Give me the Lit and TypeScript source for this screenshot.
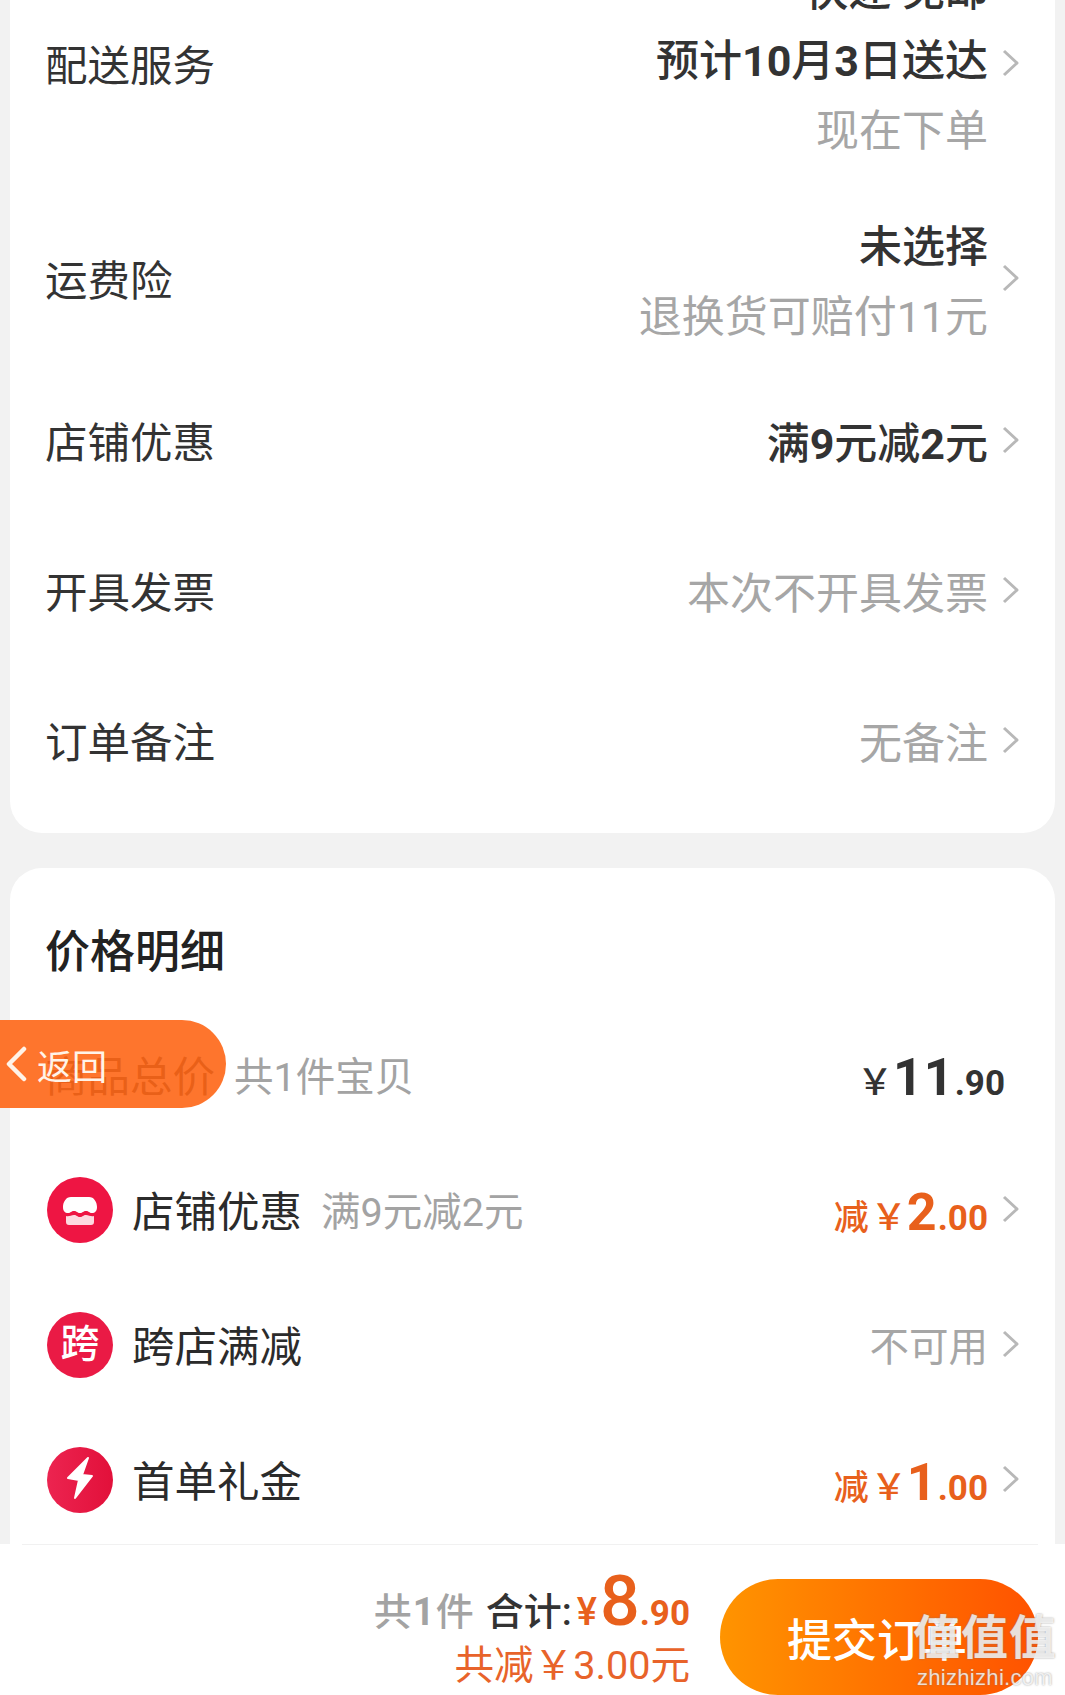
import { LitElement, html, css } from "lit";
import { customElement } from "lit/decorators.js";

const chevron = html`<svg class="chev" viewBox="0 0 17 28" width="17" height="28"><polyline points="2,2 15,14 2,26" fill="none" stroke="#b8b8b8" stroke-width="3" stroke-linejoin="round"/></svg>`;

@customElement("app-root")
export class AppRoot extends LitElement {
  static styles = css`
    :host {
      display: flex;
      flex-direction: column;
      width: 1065px;
      height: 1695px;
      overflow: hidden;
      position: relative;
      background: #f2f2f2;
      font-family: Roboto, "Noto Sans CJK SC", sans-serif;
      color: #333;
      font-size: 43px;
    }
    .scroll { flex: 1; min-height: 0; overflow: hidden; padding: 0 10px; }
    .card { background: #fff; padding: 0 35px; }
    .card.top { margin-top: -42px; height: 875px; border-radius: 0 0 32px 32px; box-sizing: border-box; }
    .card.price { margin-top: 35px; border-radius: 32px 32px 0 0; height: 700px; box-sizing: border-box; }
    .row { display: flex; align-items: center; justify-content: space-between; box-sizing: border-box; }
    .r1 { height: 212px; }
    .r1 .label { margin-top: 6px; }
    .r2 { height: 198px; padding: 42px 0 16px; }
    .r3 { height: 150px; padding-top: 2px; }
    .label { font-size: 42.5px; line-height: 60px; color: #333; }
    .right { display: flex; align-items: center; gap: 14px; margin-right: 1px; }
    .val { line-height: 60px; }
    .lines { display: flex; flex-direction: column; align-items: flex-end; line-height: 70px; }
    .r1 .lines { margin-bottom: 6px; }
    .r1 .lines div:nth-child(1), .r1 .lines div:nth-child(2) { font-weight: 500; }
    .strong { font-weight: 500; color: #333; }
    .b { font-weight: 700; }
    .gray { color: #a6a6a6; }
    .chev { flex: none; margin-bottom: 8px; }
    .r1 .chev { margin-bottom: 2px; }
    .title { font-size: 45px; font-weight: 500; line-height: 60px; padding: 55px 0 27px; color: #222; }
    .p { height: 135px; }
    .left { display: flex; align-items: center; }
    .sub { font-size: 39.5px; line-height: 60px; color: #a3a3a3; margin-left: 19px; }
    .small { font-size: 39.5px; }
    .p .label { color: #2b2b2b; }
    .icon { flex: none; width: 66px; height: 66px; margin: 0 19px 6px 2px; display: block; }
    .badge {
      flex: none; width: 66px; height: 66px; margin: 0 19px 6px 2px; border-radius: 50%;
      background: #ea1a45; color: #fff; font-size: 39px; line-height: 1; font-weight: 500;
      display: flex; align-items: center; justify-content: center; padding-bottom: 1px; box-sizing: border-box;
    }
    .money { display: flex; align-items: baseline; font-weight: 700; line-height: 1; }
    .money .y { font-family: "Noto Sans CJK SC", sans-serif; font-weight: 500; font-size: 36px; margin: 0 0 0 -2px; }
    .money .i { font-size: 52px; letter-spacing: 1px; }
    .money .d { font-size: 35px; }
    .total { margin-right: 15px; color: #333; }
    .off { color: #e8601c; }
    .off .j { font-weight: 500; font-size: 35px; margin-right: 4px; }
    .footer {
      flex: none; height: 151px; background: #fff; position: relative;
      display: flex; justify-content: flex-end; box-sizing: border-box;
      padding: 22px 27px 0 0; gap: 30px;
    }
    .footer::before {
      content: ""; position: absolute; top: 0; left: 22px; right: 27px; height: 1px; background: #f1f1f1;
    }
    .sum { display: flex; flex-direction: column; align-items: flex-end; }
    .sumline { display: flex; align-items: baseline; height: 62px; line-height: 1; font-size: 38px; }
    .sumline .cnt { color: #a3a3a3; font-weight: 500; margin-right: 11px; letter-spacing: 1px; }
    .sumline .he { color: #333; font-weight: 500; margin-right: 5px; }
    .sumline .o { color: #e8601c; font-weight: 700; }
    .sumline .yy { font-size: 38px; font-weight: 500; margin-right: 3px; }
    .sumline .big { font-size: 70px; font-weight: 500; }
    .sumline .sm { font-size: 35px; }
    .save { color: #e8632a; font-size: 39.6px; line-height: 46px; margin-top: 15px; }
    .btn {
      width: 318px; height: 116px; border-radius: 58px; margin-top: 13px;
      background: linear-gradient(90deg, #ff9400, #ff5200);
      color: #fff; font-size: 45px; font-weight: 500;
      display: flex; align-items: center; padding-left: 67px; box-sizing: border-box;
    }
    .back {
      position: absolute; left: 0; top: 1020px; width: 226px; height: 88px;
      border-radius: 0 44px 44px 0; background: rgba(254, 102, 22, 0.9);
      color: #fff3e8; font-size: 35px;
      display: flex; align-items: center; padding-left: 5px; box-sizing: border-box; gap: 10px;
    }
    .wm {
      position: absolute; left: 912px; top: 1611px; width: 146px;
      display: flex; flex-direction: column; align-items: center;
      color: rgba(255, 255, 255, 0.78);
      text-shadow: 0 0 2px rgba(120, 120, 120, 0.75);
    }
    .wm .cn { font-size: 47px; line-height: 54px; font-weight: 700; letter-spacing: 1px; white-space: nowrap; }
    .wm .en { font-family: "Liberation Sans", sans-serif; font-size: 22px; line-height: 24px; margin-top: 1px; letter-spacing: 0.3px; }
  `;

  private plain(label: string, value: any) {
    return html`<div class="row r3"><div class="label">${label}</div><div class="right">${value}${chevron}</div></div>`;
  }

  render() {
    return html`
      <div class="scroll">
        <div class="card top">
          <div class="row r1">
            <div class="label">配送服务</div>
            <div class="right">
              <div class="lines"><div>快递 免邮</div><div>预计<span class="b">10</span>月<span class="b">3</span>日送达</div><div class="gray">现在下单</div></div>
              ${chevron}
            </div>
          </div>
          <div class="row r2">
            <div class="label">运费险</div>
            <div class="right">
              <div class="lines"><div class="strong">未选择</div><div class="gray">退换货可赔付11元</div></div>
              ${chevron}
            </div>
          </div>
          ${this.plain("店铺优惠", html`<div class="strong val">满<span class="b">9</span>元减<span class="b">2</span>元</div>`)}
          ${this.plain("开具发票", html`<div class="gray val">本次不开具发票</div>`)}
          ${this.plain("订单备注", html`<div class="gray val">无备注</div>`)}
        </div>
        <div class="card price">
          <div class="title">价格明细</div>
          <div class="row p">
            <div class="left"><div class="label">商品总价</div><div class="sub">共1件宝贝</div></div>
            <div class="money total"><span class="y">￥</span><span class="i">11</span><span class="d">.90</span></div>
          </div>
          <div class="row p">
            <div class="left">
              <svg class="icon" viewBox="0 0 66 66">
                <circle cx="33" cy="33" r="33" fill="#ee1543"/>
                <path d="M24 20 H42 C47 20 50 25 50 30 C50 34 48 36 45 36 C42 36 42 34 39 34 C36 34 36 36 33 36 C30 36 30 34 27 34 C24 34 24 36 21 36 C18 36 16 34 16 30 C16 25 19 20 24 20 Z" fill="#fff"/>
                <path d="M19 39 C22 40 24 38 27 38 C30 38 30 40 33 40 C36 40 36 38 39 38 C42 38 44 40 47 39 V45 C47 47 46 48 44 48 H22 C20 48 19 47 19 45 Z" fill="#fdd9e0"/>
              </svg>
              <div class="label">店铺优惠</div><div class="sub">满9元减2元</div>
            </div>
            <div class="right">
              <div class="money off"><span class="j">减</span><span class="y">￥</span><span class="i">2</span><span class="d">.00</span></div>
              ${chevron}
            </div>
          </div>
          <div class="row p">
            <div class="left"><div class="badge">跨</div><div class="label">跨店满减</div></div>
            <div class="right"><div class="gray val small">不可用</div>${chevron}</div>
          </div>
          <div class="row p">
            <div class="left">
              <svg class="icon" viewBox="0 0 66 66">
                <defs><linearGradient id="bolt" x1="0" y1="0" x2="1" y2="0"><stop offset="0" stop-color="#ec2450"/><stop offset="1" stop-color="#e2103a"/></linearGradient></defs>
                <circle cx="33" cy="33" r="33" fill="url(#bolt)"/>
                <path d="M41 11 L21 31 L32 33 L28 51 L45 29 L35 28 Z" fill="#fff" stroke="#fff" stroke-width="2" stroke-linejoin="round"/>
              </svg>
              <div class="label">首单礼金</div>
            </div>
            <div class="right">
              <div class="money off"><span class="j">减</span><span class="y">￥</span><span class="i">1</span><span class="d">.00</span></div>
              ${chevron}
            </div>
          </div>
        </div>
      </div>
      <div class="footer">
        <div class="sum">
          <div class="sumline">
            <span class="cnt">共<span class="b">1</span>件</span><span class="he">合计:</span>
            <span class="o yy">¥</span><span class="o big">8</span><span class="o sm">.90</span>
          </div>
          <div class="save">共减￥3.00元</div>
        </div>
        <div class="btn">提交订单</div>
      </div>
      <div class="back">
        <svg viewBox="0 0 22 36" width="22" height="36"><polyline points="19,3 4,18 19,33" fill="none" stroke="#fff3e8" stroke-width="4.5" stroke-linecap="round" stroke-linejoin="round"/></svg>
        <span>返回</span>
      </div>
      <div class="wm"><div class="cn">值值值</div><div class="en">zhizhizhi.com</div></div>
    `;
  }
}
